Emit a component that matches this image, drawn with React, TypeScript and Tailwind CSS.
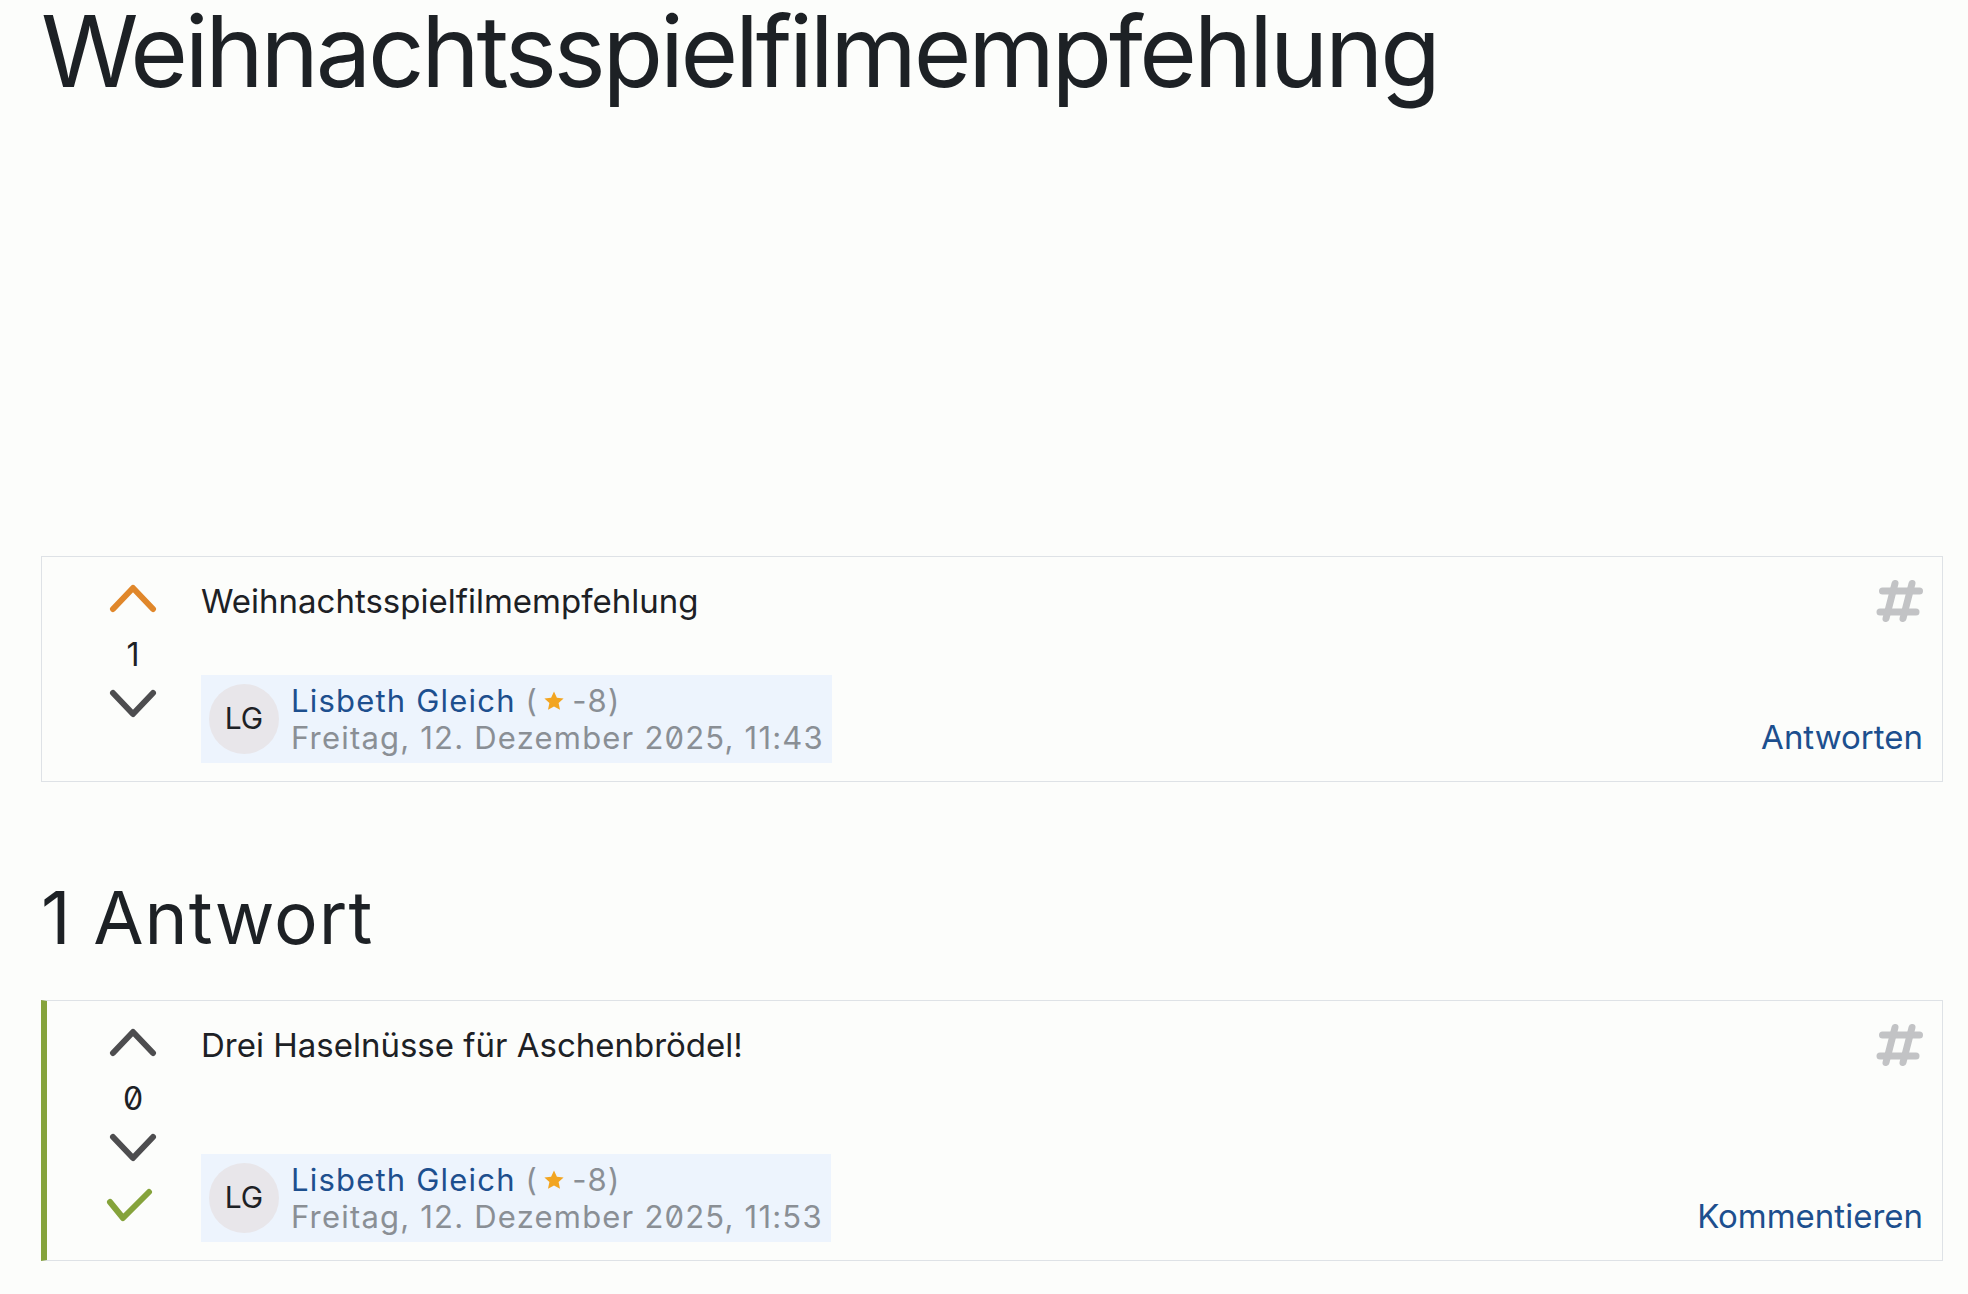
import React from "react";

const ChevronUp: React.FC<{ color: string }> = ({ color }) => (
  <svg width="48" height="30" viewBox="0 0 48 30" fill="none">
    <path d="M4 26 L24 5 L44 26" stroke={color} strokeWidth="6" strokeLinecap="round" strokeLinejoin="round" />
  </svg>
);

const ChevronDown: React.FC = () => (
  <svg width="48" height="30" viewBox="0 0 48 30" fill="none">
    <path d="M4 4 L24 25 L44 4" stroke="#4d4d4f" strokeWidth="6" strokeLinecap="round" strokeLinejoin="round" />
  </svg>
);

const Check: React.FC = () => (
  <svg width="48" height="36" viewBox="0 0 48 36" fill="none" className="-ml-[6px]">
    <path d="M4 16 L17 32 L43 6" stroke="#85a33b" strokeWidth="6" strokeLinecap="round" strokeLinejoin="round" />
  </svg>
);

const Hash: React.FC = () => (
  <svg width="48" height="48" viewBox="0 0 48 48" fill="none">
    <g stroke="#c2c3c5" strokeWidth="7" strokeLinecap="round">
      <line x1="7.5" y1="14" x2="44.5" y2="14" />
      <line x1="5" y1="35" x2="41" y2="35" />
      <line x1="20" y1="6.5" x2="11" y2="41.5" />
      <line x1="37" y1="6.5" x2="28" y2="41.5" />
    </g>
  </svg>
);

const Star: React.FC = () => (
  <svg width="24" height="24" viewBox="0 0 24 24" className="inline-block ml-[4px] mr-[6px] -mt-[5px]">
    <path d="M12 2.5l2.9 6.2 6.7.8-5 4.6 1.4 6.7L12 17.4 6 20.8l1.4-6.7-5-4.6 6.7-.8z" fill="#f2a521" />
  </svg>
);

type PostProps = {
  text: string;
  votes: string;
  upColor: string;
  accepted?: boolean;
  date: string;
  action: string;
};

const Post: React.FC<PostProps> = ({ text, votes, upColor, accepted, date, action }) => (
  <div
    className={
      "flex border border-[#dee2e6] pt-[20px] pb-[18px] pr-[19px] " +
      (accepted ? "border-l-[6px] border-l-[#85a33b] pl-[62px]" : "pl-[67px]")
    }
  >
    <div className="w-[48px] flex flex-col items-center pt-[6px] pb-[20px]">
      <ChevronUp color={upColor} />
      <div className="mt-[20px] text-[32px] leading-[44px] text-[#1d2125]">{votes}</div>
      <div className="mt-[12px]">
        <ChevronDown />
      </div>
      {accepted && (
        <div className="mt-[23px]">
          <Check />
        </div>
      )}
    </div>
    <div className="flex-1 flex flex-col justify-between ml-[44px]">
      <p className="text-[33px] leading-[1.5] text-[#1d2125]">{text}</p>
      <div className="mt-[48px] self-start flex items-center bg-[#edf4fd] pl-[8px] pr-[8px] py-[7px]">
        <div className="w-[70px] h-[70px] rounded-full bg-[#e8e6ea] flex items-center justify-center text-[30px] text-[#1d2125]">
          LG
        </div>
        <div className="ml-[12px] text-[31px] leading-[37px] tracking-[1.2px]">
          <div>
            <span className="text-[#1d4f8e]">Lisbeth Gleich</span>
            <span className="text-[#8a8f95]"> (<Star />-8)</span>
          </div>
          <div className="text-[#8a8f95]">{date}</div>
        </div>
      </div>
    </div>
    <div className="flex flex-col justify-between items-end">
      <Hash />
      <span className="text-[33px] leading-[1.5] text-[#1d4f8e]">{action}</span>
    </div>
  </div>
);

const App: React.FC = () => {
  return (
    <div className="min-h-screen bg-[#fcfdfb] pl-[41px] pr-[25px] pt-[2px] pb-[40px] font-['Inter',sans-serif] [font-feature-settings:'zero']">
      <h1 className="text-[99px] leading-none tracking-[-3.3px] text-[#1d2125] font-normal">Weihnachtsspielfilmempfehlung</h1>

      <div className="mt-[455px]">
        <Post
          text="Weihnachtsspielfilmempfehlung"
          votes="1"
          upColor="#e0872a"
          date="Freitag, 12. Dezember 2025, 11:43"
          action="Antworten"
        />
      </div>

      <h2 className="mt-[99px] text-[73px] leading-none tracking-[1px] text-[#1d2125] font-normal">1 Antwort</h2>

      <div className="mt-[46px]">
        <Post
          text="Drei Haselnüsse für Aschenbrödel!"
          votes="0"
          upColor="#4d4d4f"
          accepted
          date="Freitag, 12. Dezember 2025, 11:53"
          action="Kommentieren"
        />
      </div>
    </div>
  );
};

export default App;
